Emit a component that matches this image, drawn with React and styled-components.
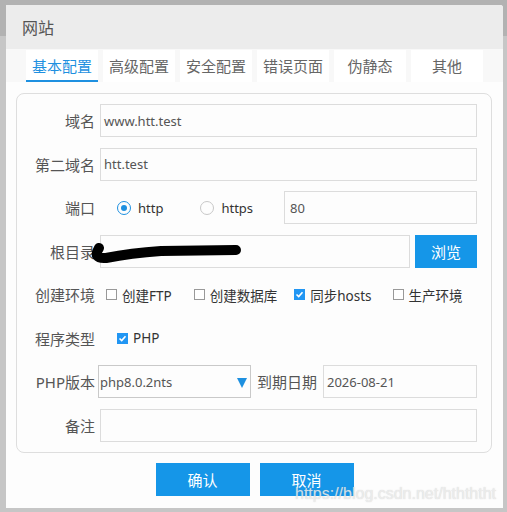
import React from 'react'
import styled, { createGlobalStyle } from 'styled-components'

const Global = createGlobalStyle`
  html, body {
    margin: 0;
    padding: 0;
  }
  body {
    background: linear-gradient(#b2b2b2 0, #b2b2b2 36px, #c6c6c6 36px);
    font-family: "Noto Sans", "Noto Sans CJK SC", sans-serif;
    width: 507px;
    height: 512px;
    overflow: hidden;
  }
`

const Dialog = styled.div`
  position: relative;
  margin: 5px 0 0 6px;
  width: 497px;
  height: 503px;
  background: #fdfdfd;
  border-radius: 0 3px 0 0;
`

const Header = styled.div`
  height: 44px;
  background: #ececec;
  border-radius: 0 3px 0 0;
  padding-left: 16px;
  display: flex;
  align-items: center;
  font-size: 16px;
  color: #555;
`

const Tabs = styled.div`
  display: flex;
  gap: 5px;
  padding: 1px 0 0 20px;
  height: 32px;
  background: #f8f8f8;
`

const Tab = styled.div`
  width: 72px;
  height: 30px;
  display: flex;
  align-items: center;
  justify-content: center;
  background: #fff;
  font-size: 15px;
  color: ${p => (p.active ? '#1e90e0' : '#666')};
  border-bottom: 2px solid ${p => (p.active ? '#1e90e0' : 'transparent')};
`

const Panel = styled.div`
  margin: 11px 0 0 10px;
  width: 474px;
  height: 348px;
  border: 1px solid #dedede;
  border-radius: 8px;
  padding: 10px 0 0 0;
  display: flex;
  flex-direction: column;
  gap: 10.5px;
`

const Row = styled.div`
  display: flex;
  align-items: center;
  height: 33px;
`

const Label = styled.div`
  width: ${p => p.w ?? 78}px;
  margin-right: ${p => p.gap ?? 5}px;
  text-align: right;
  font-size: 15px;
  color: #555;
  white-space: nowrap;
  flex-shrink: 0;
`

const Input = styled.div`
  position: relative;
  box-sizing: border-box;
  width: ${p => p.w}px;
  height: 33px;
  border: 1px solid ${p => p.dark ? '#c9c9c9' : '#dcdcdc'};
  background: #fdfdfd;
  padding-left: ${p => p.pad ?? 3}px;
  display: flex;
  align-items: center;
  font-size: 13px;
  color: #555;
  margin-left: ${p => p.ml ?? 0}px;
  flex-shrink: 0;
`

const Arrow = styled.span`
  position: absolute;
  right: 3px;
  top: 12px;
  width: 0;
  height: 0;
  border-left: 5px solid transparent;
  border-right: 5px solid transparent;
  border-top: 10px solid #1e90e0;
`

const RadioItem = styled.label`
  display: flex;
  align-items: center;
  gap: 7px;
  font-size: 13px;
  color: #333;
  margin-left: ${p => p.ml}px;
`

const Radio = styled.span`
  box-sizing: border-box;
  width: 14px;
  height: 14px;
  border-radius: 50%;
  border: 1px solid ${p => (p.on ? '#1e90e0' : '#c8c8c8')};
  display: flex;
  align-items: center;
  justify-content: center;
  &::after {
    content: '';
    width: 6px;
    height: 6px;
    border-radius: 50%;
    background: ${p => (p.on ? '#1e90e0' : 'transparent')};
  }
`

const CheckItem = styled.label`
  display: flex;
  align-items: center;
  gap: 5px;
  font-size: 13.5px;
  color: #333;
  margin-left: ${p => p.ml}px;
`

const Box = styled.span`
  box-sizing: border-box;
  width: 11px;
  height: 11px;
  border: 1px solid ${p => (p.on ? '#2196f3' : '#999')};
  background: ${p => (p.on ? '#2196f3' : '#fff')};
  display: flex;
  align-items: center;
  justify-content: center;
`

const Button = styled.button`
  width: ${p => p.w ?? 94}px;
  height: 33px;
  border: none;
  background: #1596e8;
  color: #fff;
  font-family: inherit;
  font-size: 15px;
  padding: 0;
  margin-left: ${p => p.ml ?? 0}px;
  flex-shrink: 0;
`

const Footer = styled.div`
  display: flex;
  justify-content: center;
  gap: 10px;
  margin-top: 10px;
`

const Scribble = styled.svg`
  position: absolute;
  left: -12px;
  top: 0;
`

const Watermark = styled.div`
  position: absolute;
  left: 289px;
  top: 480px;
  font-family: "Liberation Sans", Arial, sans-serif;
  font-size: 16px;
  color: rgba(242, 242, 242, 0.8);
  text-shadow: 0 0 1px rgba(160, 160, 160, 0.5);
  white-space: nowrap;
`

const Check = () => (
  <svg width="9" height="9" viewBox="0 0 9 9">
    <path d="M1.5 4.5 L3.7 6.5 L7.5 2.3" fill="none" stroke="#fff" strokeWidth="1.6" />
  </svg>
)

const tabs = ['基本配置', '高级配置', '安全配置', '错误页面', '伪静态', '其他']

export default function App() {
  return (
    <>
      <Global />
      <Dialog>
        <Header>网站</Header>
        <Tabs>
          {tabs.map((t, i) => (
            <Tab key={t} active={i === 0}>{t}</Tab>
          ))}
        </Tabs>
        <Panel>
          <Row>
            <Label>域名</Label>
            <Input w={377}>www.htt.test</Input>
          </Row>
          <Row>
            <Label>第二域名</Label>
            <Input w={377}>htt.test</Input>
          </Row>
          <Row>
            <Label>端口</Label>
            <RadioItem ml={17}><Radio on />http</RadioItem>
            <RadioItem ml={37}><Radio />https</RadioItem>
            <Input w={193} ml={31} pad={5} style={{ marginLeft: 'auto', marginRight: 14 }}>80</Input>
          </Row>
          <Row>
            <Label>根目录</Label>
            <Input w={310}>
              <Scribble width="160" height="33" viewBox="0 0 160 33">
                <path
                  d="M10 12 Q3 23 17 22 Q42 17 72 15 L147 14"
                  fill="none"
                  stroke="#000"
                  strokeWidth="10"
                  strokeLinecap="round"
                  strokeLinejoin="round"
                />
              </Scribble>
            </Input>
            <Button w={62} ml={5}>浏览</Button>
          </Row>
          <Row>
            <Label>创建环境</Label>
            <CheckItem ml={6}><Box />创建FTP</CheckItem>
            <CheckItem ml={22}><Box />创建数据库</CheckItem>
            <CheckItem ml={17}><Box on><Check /></Box>同步hosts</CheckItem>
            <CheckItem ml={21}><Box />生产环境</CheckItem>
          </Row>
          <Row>
            <Label>程序类型</Label>
            <CheckItem ml={17}><Box on><Check /></Box>PHP</CheckItem>
          </Row>
          <Row>
            <Label gap={3}>PHP版本</Label>
            <Input w={153} dark pad={1}>php8.0.2nts<Arrow /></Input>
            <Label w={66} gap={6}>到期日期</Label>
            <Input w={154}>2026-08-21</Input>
          </Row>
          <Row>
            <Label>备注</Label>
            <Input w={377} />
          </Row>
        </Panel>
        <Footer>
          <Button>确认</Button>
          <Button>取消</Button>
        </Footer>
        <Watermark>https://blog.csdn.net/hthththt</Watermark>
      </Dialog>
    </>
  )
}
